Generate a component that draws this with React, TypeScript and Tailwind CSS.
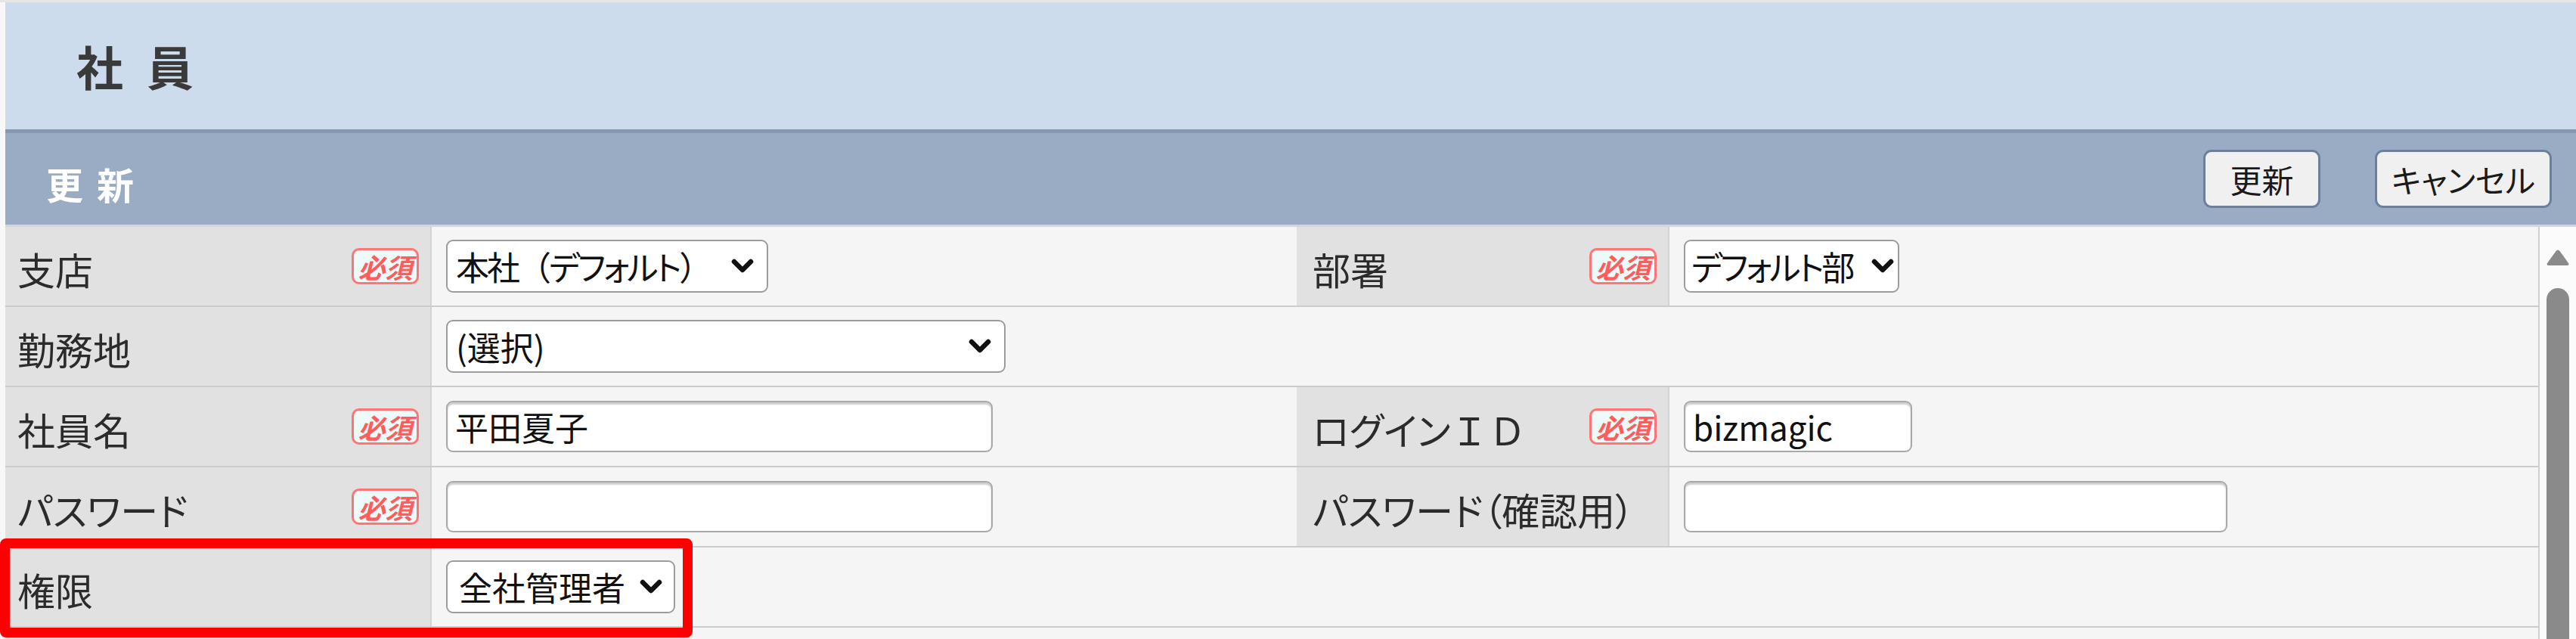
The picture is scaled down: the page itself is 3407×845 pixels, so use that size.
import React from "react";

// Chevron used on the right side of the fake select boxes
const Chevron = () => (
  <svg width="32" height="22" viewBox="0 0 32 22" className="shrink-0">
    <path
      d="M5 5 L16 16 L27 5"
      fill="none"
      stroke="#111"
      strokeWidth="6.5"
      strokeLinecap="round"
      strokeLinejoin="round"
    />
  </svg>
);

// Red "必須" stamp shown next to required labels
const Required = () => (
  <div className="w-[89px] h-[48px] rounded-[10px] border-[3px] border-[#ff7474] bg-[#eefaf9] flex items-center justify-center">
    <span className="text-[36px] leading-none font-bold italic text-[#ff5c5c]">
      必須
    </span>
  </div>
);

const Select = ({
  value,
  width,
  pl = "pl-[11px]",
  pr = "pr-[16px]",
  tight,
}: {
  value: React.ReactNode;
  width: string;
  pl?: string;
  pr?: string;
  tight?: boolean;
}) => (
  <div
    className={`${width} ${pl} ${pr} h-[70px] rounded-[9px] border-2 border-[#9c9c9c] bg-white flex items-center justify-between gap-[4px]`}
  >
    <span
      className={`text-[44px] leading-tight text-[#111] whitespace-nowrap ${
        tight ? "tracking-[-3px]" : ""
      }`}
    >
      {value}
    </span>
    <Chevron />
  </div>
);

const Input = ({ value, width }: { value?: string; width: string }) => (
  <div
    className={`${width} h-[68px] rounded-[9px] border-2 border-[#a8a8a8] bg-white shadow-[inset_0_3px_2px_rgba(0,0,0,0.2)] flex items-center pl-[10px]`}
  >
    <span className="text-[44px] leading-tight text-[#111] whitespace-nowrap">
      {value}
    </span>
  </div>
);

const Label = ({
  children,
  required,
  width,
  pl,
  pr,
}: {
  children: React.ReactNode;
  required?: boolean;
  width: string;
  pl: string;
  pr: string;
}) => (
  <div
    className={`${width} ${pl} ${pr} shrink-0 h-full bg-[#e1e1e1] border-r-2 border-[#d3d3d3] flex items-center justify-between`}
  >
    <span className="pt-[6px] text-[50px] leading-none text-[#2b2b2b] whitespace-nowrap">
      {children}
    </span>
    {required && <Required />}
  </div>
);

const Row = ({ children }: { children: React.ReactNode }) => (
  <div className="h-[106px] flex border-b-2 border-[#cccccc] bg-[#f5f5f5]">
    {children}
  </div>
);

// left pair of columns
const LeftLabel = (props: { children: React.ReactNode; required?: boolean }) => (
  <Label width="w-[564px]" pl="pl-[16px]" pr="pr-[15px]" {...props} />
);
// right pair of columns
const RightLabel = (props: { children: React.ReactNode; required?: boolean }) => (
  <Label width="w-[493px]" pl="pl-[21px]" pr="pr-[15px]" {...props} />
);

const Value = ({
  children,
  width = "w-[1144px]",
}: {
  children?: React.ReactNode;
  width?: string;
}) => (
  <div className={`${width} shrink-0 h-full flex items-center pl-[19px]`}>
    {children}
  </div>
);

export default function App() {
  return (
    <div className="w-[3407px] h-[845px] relative overflow-hidden bg-white font-['Noto_Sans_CJK_JP',sans-serif] [font-feature-settings:'palt']">
      <div className="h-[3px] bg-[#e6e6e6]" />
      <div className="flex h-[842px]">
        <div className="w-[7px] shrink-0 bg-[#f8f8f8]" />
        <div className="flex-1 flex flex-col">
          {/* page title */}
          <div className="h-[168px] bg-[#cddcec] flex items-center pl-[94px]">
            <h1 className="text-[62px] leading-none font-bold text-[#3a3a3a] tracking-[31px]">
              社員
            </h1>
          </div>
          <div className="h-[5px] bg-[#8699b0]" />

          {/* section bar with actions */}
          <div className="h-[121px] bg-[#99acc4] flex items-center justify-between pr-[32px]">
            <span className="pl-[54px] pt-[12px] text-[49px] leading-none font-bold text-white tracking-[18px]">
              更新
            </span>
            <div className="flex items-center gap-[72px]">
              <button className="w-[155px] h-[77px] rounded-[11px] border-[3px] border-[#6d809b] bg-[#f0f0f0] text-[42px] leading-none text-[#1a1a1a]">
                更新
              </button>
              <button className="w-[234px] h-[77px] rounded-[11px] border-[3px] border-[#6d809b] bg-[#f0f0f0] text-[42px] leading-none text-[#1a1a1a]">
                キャンセル
              </button>
            </div>
          </div>
          <div className="h-[3px] bg-[#d2d5d9]" />

          {/* form table + scrollbar */}
          <div className="flex-1 flex min-h-0">
            <div className="flex-1 bg-[#f5f5f5]">
              <Row>
                <LeftLabel required>支店</LeftLabel>
                <Value>
                  <Select
                    value={
                      <>
                        本社<span className="[font-feature-settings:normal]">（</span>デフォルト
                        <span className="[font-feature-settings:normal]">）</span>
                      </>
                    }
                    width="w-[426px]"
                    tight
                  />
                </Value>
                <RightLabel required>部署</RightLabel>
                <Value width="flex-1">
                  <Select
                    value="デフォルト部"
                    width="w-[285px]"
                    pl="pl-[8px]"
                    pr="pr-[4px]"
                    tight
                  />
                </Value>
              </Row>
              <Row>
                <LeftLabel>勤務地</LeftLabel>
                <Value width="flex-1">
                  <Select value="(選択)" width="w-[740px]" />
                </Value>
              </Row>
              <Row>
                <LeftLabel required>社員名</LeftLabel>
                <Value>
                  <Input value="平田夏子" width="w-[723px]" />
                </Value>
                <RightLabel required>
                  ログイン<span className="[font-feature-settings:normal]">ＩＤ</span>
                </RightLabel>
                <Value width="flex-1">
                  <Input value="bizmagic" width="w-[302px]" />
                </Value>
              </Row>
              <Row>
                <LeftLabel required>パスワード</LeftLabel>
                <Value>
                  <Input width="w-[723px]" />
                </Value>
                <RightLabel>パスワード（確認用）</RightLabel>
                <Value width="flex-1">
                  <Input width="w-[719px]" />
                </Value>
              </Row>
              <Row>
                <LeftLabel>権限</LeftLabel>
                <Value width="flex-1">
                  <Select value="全社管理者" width="w-[303px]" pl="pl-[15px]" pr="pr-[14px]" />
                </Value>
              </Row>
            </div>

            {/* scrollbar */}
            <div className="w-[50px] shrink-0 border-l-2 border-[#d0d0d0] bg-[#fbfbfb] flex flex-col items-center pt-[29px]">
              <svg width="32" height="24" viewBox="0 0 32 24">
                <path
                  d="M13.5 3 Q16 0 18.5 3 L30 19 Q31.5 22 28 22 L4 22 Q0.5 22 2 19 Z"
                  fill="#8a8a8a"
                />
              </svg>
              <div className="mt-[28px] w-[30px] flex-1 rounded-t-full bg-[#8a8a8a]" />
            </div>
          </div>
        </div>
      </div>

      {/* red highlight around 権限 row */}
      <div className="absolute left-0 top-[712px] w-[916px] h-[131px] border-[13px] border-[#ff0000] rounded-[8px]" />
    </div>
  );
}
